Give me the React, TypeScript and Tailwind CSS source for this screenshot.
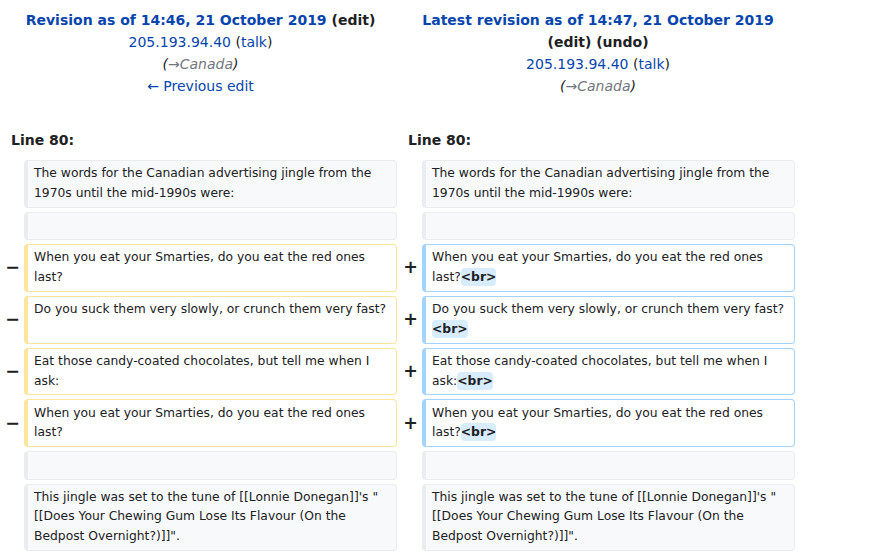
import React from "react";

type Row =
  | { kind: "context"; text: string }
  | { kind: "change"; left: string; right: string };

const rows: Row[] = [
  { kind: "context", text: "The words for the Canadian advertising jingle from the 1970s until the mid-1990s were:" },
  { kind: "context", text: "" },
  { kind: "change", left: "When you eat your Smarties, do you eat the red ones last?", right: "When you eat your Smarties, do you eat the red ones last?" },
  { kind: "change", left: "Do you suck them very slowly, or crunch them very fast?", right: "Do you suck them very slowly, or crunch them very fast?" },
  { kind: "change", left: "Eat those candy-coated chocolates, but tell me when I ask:", right: "Eat those candy-coated chocolates, but tell me when I ask:" },
  { kind: "change", left: "When you eat your Smarties, do you eat the red ones last?", right: "When you eat your Smarties, do you eat the red ones last?" },
  { kind: "context", text: "" },
  { kind: "context", text: "This jingle was set to the tune of [[Lonnie Donegan]]'s \"[[Does Your Chewing Gum Lose Its Flavour (On the Bedpost Overnight?)]]\"." },
];

const cell =
  "align-top text-[12.32px] leading-[1.6] px-[6px] py-[3.25px] border border-l-4 rounded-[4px] whitespace-pre-wrap break-words text-[#202122]";

function ContextCell({ text }: { text: string }) {
  // empty context lines still keep one line of height
  return <td className={`${cell} bg-[#f8f9fa] border-[#eaecf0]`}>{text || "\u00a0"}</td>;
}

function Marker({ sign }: { sign?: string }) {
  return (
    <td className="align-middle text-right font-bold text-[17.5px] leading-[1.2] text-[#202122] p-0">
      {sign}
    </td>
  );
}

export default function App() {
  return (
    <div className="bg-white min-h-screen font-['DejaVu_Sans',sans-serif] text-[#202122]">
      <table className="w-[799px] table-fixed border-separate border-spacing-1">
        <colgroup>
          <col className="w-[16px]" />
          <col className="w-[373px]" />
          <col className="w-[17px]" />
          <col className="w-[373px]" />
        </colgroup>
        <tbody>
          {/* revision titles */}
          <tr className="text-[14px] leading-[22px]">
            <td colSpan={2} className="align-top text-center px-[7px] py-[4.6px]">
              <div>
                <strong>
                  <a className="text-[#0645ad]">Revision as of 14:46, 21 October 2019</a>{" "}
                  <span>(edit)</span>
                </strong>
              </div>
              <div>
                <a className="text-[#0645ad]">205.193.94.40</a> (<a className="text-[#0645ad]">talk</a>)
              </div>
              <div className="italic">
                (<span className="text-[#72777d]">→Canada</span>)
              </div>
              <div>
                <a className="text-[#0645ad]">← Previous edit</a>
              </div>
            </td>
            <td colSpan={2} className="align-top text-center px-[7px] py-[4.6px]">
              <div>
                <strong>
                  <a className="text-[#0645ad]">Latest revision as of 14:47, 21 October 2019</a>
                  <br />
                  <span>(edit)</span> <span>(undo)</span>
                </strong>
              </div>
              <div>
                <a className="text-[#0645ad]">205.193.94.40</a> (<a className="text-[#0645ad]">talk</a>)
              </div>
              <div className="italic">
                (<span className="text-[#72777d]">→Canada</span>)
              </div>
            </td>
          </tr>

          {/* line numbers */}
          <tr className="text-[14px] leading-[22px] font-bold">
            <td colSpan={2} className="px-[7px] pt-[24px] pb-[4.6px]">Line 80:</td>
            <td colSpan={2} className="px-[7px] pt-[24px] pb-[4.6px]">Line 80:</td>
          </tr>

          {rows.map((r, i) =>
            r.kind === "context" ? (
              <tr key={i}>
                <Marker />
                <ContextCell text={r.text} />
                <Marker />
                <ContextCell text={r.text} />
              </tr>
            ) : (
              <tr key={i}>
                <Marker sign="−" />
                <td className={`${cell} bg-white border-[#ffe49c]`}>{r.left}</td>
                <Marker sign="+" />
                <td className={`${cell} bg-white border-[#a3d3ff]`}>
                  {r.right}
                  <span className="font-bold bg-[#d8ecff] rounded-[4px] py-[2px]">&lt;br&gt;</span>
                </td>
              </tr>
            )
          )}
        </tbody>
      </table>
    </div>
  );
}
